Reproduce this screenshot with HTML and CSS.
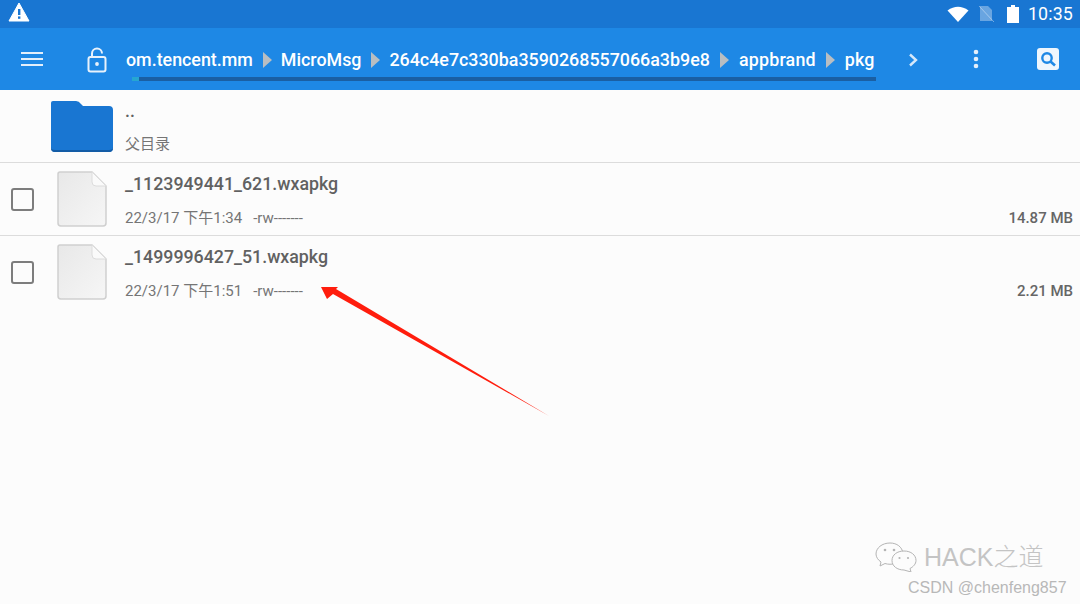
FILE: index.html
```html
<!DOCTYPE html>
<html lang="zh">
<head>
<meta charset="utf-8">
<title>Files</title>
<link rel="stylesheet" href="styles.css">
</head>
<body>
<div class="page">
  <header class="status">
    <svg class="warn" width="22" height="20" viewBox="0 0 22 20"><path d="M11 1 L21 19 H1 Z" fill="#fff" stroke="#fff" stroke-linejoin="round"/><rect x="10" y="7" width="2.4" height="6" fill="#1976d2"/><rect x="10" y="14.4" width="2.4" height="2.4" fill="#1976d2"/></svg>
    <div class="status-right">
      <svg width="22" height="16" viewBox="0 0 22 16"><path d="M0.5 4.5 Q11 -3 21.5 4.5 L11 16 Z" fill="#fff"/></svg>
      <svg class="sim" width="16" height="18" viewBox="0 0 16 18"><path d="M2 1 H10 L14 5 V16 H2 Z" fill="#fff" fill-opacity=".35"/><path d="M1 1 L16 17" stroke="#fff" stroke-opacity=".4" stroke-width="1"/></svg>
      <svg class="batt" width="12" height="18" viewBox="0 0 12 18"><path d="M4 0 H8 V2 H12 V18 H0 V2 H4 Z" fill="#fff"/></svg>
      <span class="clock">10:35</span>
    </div>
  </header>
  <nav class="toolbar">
    <svg class="menu" width="22" height="16" viewBox="0 0 22 16"><path d="M0 2 H22 M0 8 H22 M0 14 H22" stroke="#e3effb" stroke-width="2.2"/></svg>
    <svg class="lock" width="20" height="26" viewBox="0 0 20 26"><path d="M5 10 V6.5 A5 5 0 0 1 15 6.500" fill="none" stroke="#e8f2fc" stroke-width="2"/><rect x="1.500" y="10" width="17" height="14.500" rx="2" fill="none" stroke="#e8f2fc" stroke-width="2"/><circle cx="10" cy="17" r="1.900" fill="#e8f2fc"/></svg>
    <div class="crumbs-wrap">
      <div class="crumbs">
        <span>om.tencent.mm</span><i class="sep"></i>
        <span>MicroMsg</span><i class="sep"></i>
        <span>264c4e7c330ba3590268557066a3b9e8</span><i class="sep"></i>
        <span class="crumb-tail">appbrand</span><i class="sep"></i>
        <span class="crumb-tail">pkg</span>
      </div>
      <div class="track"><div class="thumb"></div></div>
    </div>
    <svg class="chev" width="10" height="14" viewBox="0 0 10 14"><path d="M2 1.500 L8 7 L2 12.500" fill="none" stroke="#d6e8fa" stroke-width="2.400"/></svg>
    <svg class="dots" width="6" height="20" viewBox="0 0 6 20"><circle cx="3" cy="3" r="2.300" fill="#e3effb"/><circle cx="3" cy="10" r="2.300" fill="#e3effb"/><circle cx="3" cy="17" r="2.300" fill="#e3effb"/></svg>
    <svg class="search" width="22" height="22" viewBox="0 0 22 22"><rect width="22" height="22" rx="3" fill="#eef6fd"/><circle cx="10" cy="10" r="4.700" fill="none" stroke="#1e88e5" stroke-width="2.400"/><path d="M13.500 13.500 L18 17.500" stroke="#1e88e5" stroke-width="2.600"/></svg>
  </nav>
  <main class="list">
    <section class="row parent">
      <svg class="folder" width="64" height="52" viewBox="0 0 64 52"><path d="M3 1 H26 Q29 1 31 4 L33 6 H59 Q63 6 63 10 V48 Q63 52 59 52 H5 Q1 52 1 48 V3 Q1 1 3 1 Z" fill="#1976d2"/><path d="M1 47 V48 Q1 52 5 52 H59 Q63 52 63 48 V47 Q63 50 59 50 H5 Q1 50 1 47 Z" fill="#135ca6"/></svg>
      <div class="info">
        <div class="name">..</div>
        <div class="meta meta-parent">父目录</div>
      </div>
    </section>
    <section class="row">
      <span class="check"></span>
      <svg class="file" width="50" height="56" viewBox="0 0 50 56"><defs><linearGradient id="paper" x1="0" y1="0" x2="1" y2="1"><stop offset="0" stop-color="#e8e8e8"/><stop offset="1" stop-color="#f6f6f6"/></linearGradient></defs><path d="M3 1 H35 L49 15 V52 Q49 55 46 55 H4 Q1 55 1 52 V3 Q1 1 3 1 Z" fill="url(#paper)" stroke="#cfcfcf" stroke-width="1.500"/><path d="M35 1 V11 Q35 15 39 15 H49 Z" fill="#fafafa" stroke="#dcdcdc"/></svg>
      <div class="info">
        <div class="name">_1123949441_621.wxapkg</div>
        <div class="meta"><span class="date">22/3/17 下午1:34</span><span>-rw-------</span></div>
      </div>
      <div class="size">14.87 MB</div>
    </section>
    <section class="row">
      <span class="check"></span>
      <svg class="file" width="50" height="56" viewBox="0 0 50 56"><path d="M3 1 H35 L49 15 V52 Q49 55 46 55 H4 Q1 55 1 52 V3 Q1 1 3 1 Z" fill="url(#paper)" stroke="#cfcfcf" stroke-width="1.500"/><path d="M35 1 V11 Q35 15 39 15 H49 Z" fill="#fafafa" stroke="#dcdcdc"/></svg>
      <div class="info">
        <div class="name">_1499996427_51.wxapkg</div>
        <div class="meta"><span class="date">22/3/17 下午1:51</span><span>-rw-------</span></div>
      </div>
      <div class="size">2.21 MB</div>
    </section>
  </main>
  <svg class="arrow" width="240" height="140" viewBox="0 0 240 140"><path d="M1 1 L18 1 L16 3 L229 130 L13 8 L7 13 Z" fill="#ff1d0d"/></svg>
  <div class="mark">
    <div class="mark-top">
      <svg width="44" height="30" viewBox="0 0 44 30"><g fill="#fcfcfc" stroke="#b4b4b4"><path d="M15 1 C7 1 1 6 1 12 C1 15 3 18 6 20 L5 24 L10 21.500 C13 22.500 17 22.500 20 21.500 C27 21 29 14 28 11 C27 5 22 1 15 1 Z"/><path d="M29 9 C22 9 17 13 17 18.500 C17 24 22 28 29 28 L36 30 L35 26.500 C38 25 41 22 41 18.500 C41 13 36 9 29 9 Z"/></g><g fill="#b4b4b4"><circle cx="10" cy="8" r="1.300"/><circle cx="19" cy="8" r="1.300"/><circle cx="24.500" cy="16" r="1.100"/><circle cx="33" cy="16" r="1.100"/></g></svg>
      <span class="mark-title">HACK之道</span>
    </div>
    <div class="mark-sub">CSDN @chenfeng857</div>
  </div>
</div>
</body>
</html>
```
FILE: styles.css
```css
* { box-sizing: border-box; }
html, body { margin: 0; padding: 0; }
body { background: #fcfcfc; font-family: Roboto, "Noto Sans CJK SC", sans-serif; }
.page { position: relative; width: 1080px; height: 604px; overflow: hidden; background: #fcfcfc; }

.status { height: 28px; background: #1976d2; display: flex; align-items: center; justify-content: space-between; padding: 0 7px 0 8px; }
.warn { display: block; margin-top: -4px; }
.status-right { display: flex; align-items: center; margin-top: -1px; }
.sim { margin-left: 9px; }
.batt { margin-left: 13px; }
.clock { margin-left: 9px; color: #fff; font-size: 17.8px; letter-spacing: .15px; line-height: 20px; }

.toolbar { height: 62px; background: #1e88e5; display: flex; align-items: center; padding-left: 21px; }
.menu { margin-right: 44px; }
.lock { margin-right: 19px; margin-top: 2px; }
.crumbs-wrap { width: 750px; position: relative; height: 62px; margin-right: 32px; }
.crumbs { display: flex; align-items: center; height: 62px; padding-top: 1px; color: #fff; font-size: 17.85px; font-weight: 500; white-space: nowrap; }
.crumb-tail { margin-left: 1px; letter-spacing: .2px; }
.sep { flex: none; width: 0; height: 0; margin: 0 9px 0 10px; border-left: 9px solid #b9bec2; border-top: 8px solid transparent; border-bottom: 8px solid transparent; }
.track { position: absolute; left: 6px; top: 49px; width: 744px; height: 4px; background: #1a5fa3; }
.thumb { width: 7px; height: 4px; background: #26a6d1; }
.chev { margin-right: 55px; margin-top: 2px; }
.dots { margin-right: 58px; }

.row { height: 73px; border-bottom: 1px solid #dcdcdc; display: flex; align-items: center; position: relative; padding-left: 11px; }
.row:last-child { height: 72px; border-bottom: 0; }
.parent { padding-left: 50px; }
.check { width: 23px; height: 23px; border: 2.5px solid #7d7d7d; border-radius: 3px; flex: none; }
.file { flex: none; margin-left: 23px; margin-right: 18px; }
.folder { flex: none; margin-right: 11px; margin-top: -1px; }
.info { flex: 1; height: 72px; display: flex; flex-direction: column; }
.name { margin-top: 11px; height: 20px; line-height: 20px; font-size: 17.8px; font-weight: 500; color: #616161; white-space: nowrap; }
.meta { margin-top: 14px; line-height: 20px; font-size: 15px; color: #757575; white-space: nowrap; }
.meta-parent { margin-top: 13px; }
.date { margin-right: 11px; }
.size { position: absolute; right: 7px; top: 45px; line-height: 20px; font-size: 15px; font-weight: 500; color: #666; }

.arrow { position: absolute; left: 320px; top: 286px; }

.mark { position: absolute; left: 875px; top: 542px; width: 205px; }
.mark-top { display: flex; align-items: center; }
.mark-title { margin-left: 5px; font-size: 25px; font-weight: 300; line-height: 30px; color: #c4c4c4; font-family: "Liberation Sans", "Noto Sans CJK SC", sans-serif; }
.mark-sub { margin: 7px 0 0 33px; font-size: 16px; line-height: 18px; color: #b8b8b8; font-family: "Liberation Sans", sans-serif; }
```
